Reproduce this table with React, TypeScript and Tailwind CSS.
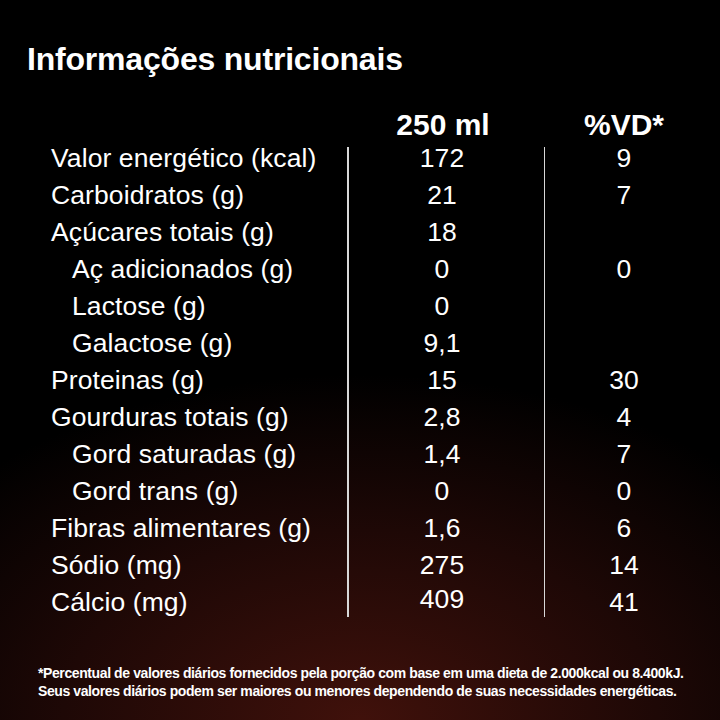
const rows: { label: string; indent?: boolean; qty: string; vd: string }[] = [
  { label: "Valor energético (kcal)", qty: "172", vd: "9" },
  { label: "Carboidratos (g)", qty: "21", vd: "7" },
  { label: "Açúcares totais (g)", qty: "18", vd: "" },
  { label: "Aç adicionados (g)", indent: true, qty: "0", vd: "0" },
  { label: "Lactose (g)", indent: true, qty: "0", vd: "" },
  { label: "Galactose (g)", indent: true, qty: "9,1", vd: "" },
  { label: "Proteinas (g)", qty: "15", vd: "30" },
  { label: "Gourduras totais (g)", qty: "2,8", vd: "4" },
  { label: "Gord saturadas (g)", indent: true, qty: "1,4", vd: "7" },
  { label: "Gord trans (g)", indent: true, qty: "0", vd: "0" },
  { label: "Fibras alimentares (g)", qty: "1,6", vd: "6" },
  { label: "Sódio (mg)", qty: "275", vd: "14" },
  { label: "Cálcio (mg)", qty: "409", vd: "41" },
];

export default function App() {
  return (
    <div className="w-[720px] h-[720px] overflow-hidden bg-black bg-[radial-gradient(ellipse_75%_48%_at_50%_100%,#40110b_0%,#1e0806_55%,#000_100%)] text-white font-['Liberation_Sans',Arial,sans-serif]">
      <h1 className="pt-[43px] pl-[27px] text-[32px] leading-none font-bold tracking-[-0.2px]">
        Informações nutricionais
      </h1>

      <div className="mt-[35px] flex pl-[51px] text-[30px] leading-none font-bold">
        <div className="w-[297px]" />
        <div className="w-[196px] text-center pr-[6px]">250 ml</div>
        <div className="w-[160px] text-center">%VD*</div>
      </div>

      <div className="flex pl-[51px] text-[26.5px] leading-[37px] tracking-[0.1px]">
        <div className="w-[296px] flex flex-col">
          {rows.map((r) => (
            <div key={r.label} className={r.indent ? "pl-[21px]" : ""}>
              {r.label}
            </div>
          ))}
        </div>
        <div className="w-[1.5px] bg-[#d8d8d8] mt-[7px] mb-[4px]" />
        <div className="w-[195px] flex flex-col text-center pr-[8px]">
          {rows.map((r) => (
            <div key={r.label} className={r.qty === "409" ? "-translate-y-[3px]" : ""}>
              {r.qty}
            </div>
          ))}
        </div>
        <div className="w-[1.5px] bg-[#d8d8d8] mt-[7px] mb-[4px]" />
        <div className="w-[158px] flex flex-col text-center">
          {rows.map((r) => (
            <div key={r.label} className="h-[37px]">
              {r.vd}
            </div>
          ))}
        </div>
      </div>

      <div className="mt-[43px] pl-[38px] text-[14px] leading-[18px] font-bold tracking-[-0.4px]">
        <p>*Percentual de valores diários fornecidos pela porção com base em uma dieta de 2.000kcal ou 8.400kJ.</p>
        <p>Seus valores diários podem ser maiores ou menores dependendo de suas necessidades energéticas.</p>
      </div>
    </div>
  );
}
